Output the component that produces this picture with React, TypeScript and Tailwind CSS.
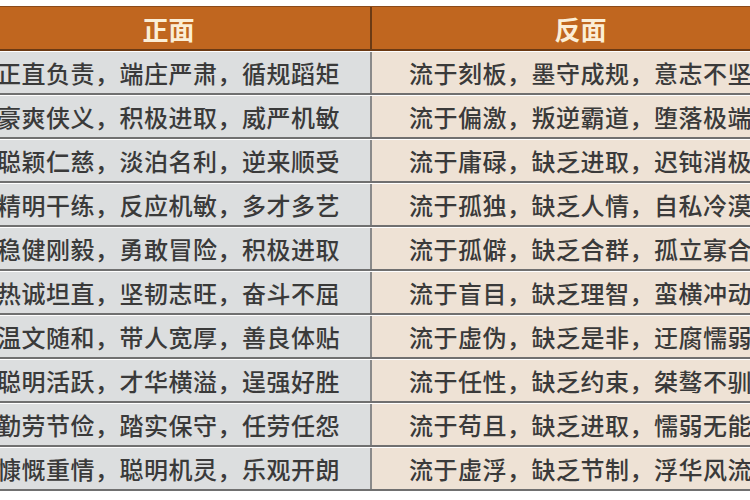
const rows: [string, string][] = [
  ["正直负责，端庄严肃，循规蹈矩", "流于刻板，墨守成规，意志不坚"],
  ["豪爽侠义，积极进取，威严机敏", "流于偏激，叛逆霸道，堕落极端"],
  ["聪颖仁慈，淡泊名利，逆来顺受", "流于庸碌，缺乏进取，迟钝消极"],
  ["精明干练，反应机敏，多才多艺", "流于孤独，缺乏人情，自私冷漠"],
  ["稳健刚毅，勇敢冒险，积极进取", "流于孤僻，缺乏合群，孤立寡合"],
  ["热诚坦直，坚韧志旺，奋斗不屈", "流于盲目，缺乏理智，蛮横冲动"],
  ["温文随和，带人宽厚，善良体贴", "流于虚伪，缺乏是非，迂腐懦弱"],
  ["聪明活跃，才华横溢，逞强好胜", "流于任性，缺乏约束，桀骜不驯"],
  ["勤劳节俭，踏实保守，任劳任怨", "流于苟且，缺乏进取，懦弱无能"],
  ["慷慨重情，聪明机灵，乐观开朗", "流于虚浮，缺乏节制，浮华风流"],
];

export default function App() {
  return (
    <div
      className="h-[500px] w-[750px] overflow-hidden bg-white pt-[6px]"
      style={{ fontFamily: '"Noto Sans CJK SC", "Noto Sans", sans-serif' }}
    >
      {/* table is wider than the view: both outer edges are cropped as in the picture */}
      <div className="ml-[-33px] w-[822px]">
        <div className="grid h-[45px] grid-cols-[405px_417px] border-t border-b-2 border-t-[#8a4a1a] border-b-[#6b3a14] bg-[#c0661f] text-[26px] font-bold text-[#fbeed6]">
          <div className="flex items-center justify-center border-r-2 border-[#6b3a14]">正面</div>
          <div className="flex items-center justify-center">反面</div>
        </div>
        {rows.map(([good, bad]) => (
          <div
            key={good}
            className="grid h-[44px] grid-cols-[405px_417px] border-t border-b-2 border-t-white border-b-[#707070] text-[24px] font-medium tracking-[0.5px] text-[#3a3a3a]"
          >
            <div className="flex items-center justify-center border-r-2 border-[#8a8a8a] bg-[#dcdedf]">{good}</div>
            <div className="flex items-center justify-center bg-[#eee2d5]">{bad}</div>
          </div>
        ))}
      </div>
    </div>
  );
}
